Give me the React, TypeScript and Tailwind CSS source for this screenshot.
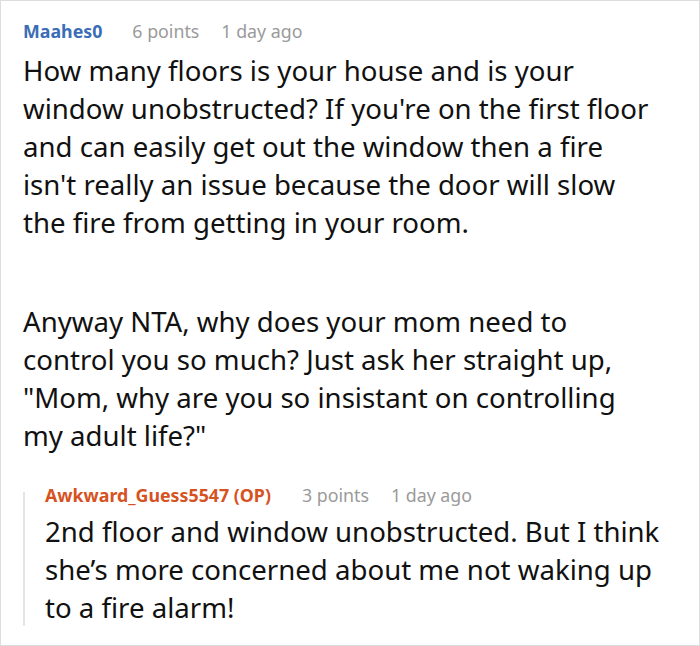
const firstParagraph = [
  "How many floors is your house and is your",
  "window unobstructed? If you're on the first floor",
  "and can easily get out the window then a fire",
  "isn't really an issue because the door will slow",
  "the fire from getting in your room.",
];

const secondParagraph = [
  "Anyway NTA, why does your mom need to",
  "control you so much? Just ask her straight up,",
  "\"Mom, why are you so insistant on controlling",
  "my adult life?\"",
];

const replyLines = [
  "2nd floor and window unobstructed. But I think",
  "she’s more concerned about me not waking up",
  "to a fire alarm!",
];

function Lines({ lines }: { lines: string[] }) {
  return (
    <>
      {lines.map((line, i) => (
        <span key={i} className="block whitespace-nowrap">
          {line}
        </span>
      ))}
    </>
  );
}

export default function App() {
  return (
    <div
      className="w-[700px] h-[646px] border border-[#dddddd] bg-white text-[#111111] overflow-hidden"
      style={{ fontFamily: '"Noto Sans", "Open Sans", sans-serif' }}
    >
      <div className="pl-[22px] pr-[24px] pt-[17px]">
        <div className="flex items-baseline text-[17.8px] leading-[26px]">
          <span className="font-bold text-[#3a6db6]">Maahes0</span>
          <span className="ml-[30px] text-[#9a9a9a]">6 points</span>
          <span className="ml-[22px] text-[#9a9a9a]">1 day ago</span>
        </div>
        <div className="mt-[7px] text-[27.6px] leading-[38px]">
          <p>
            <Lines lines={firstParagraph} />
          </p>
          <p className="mt-[61px]">
            <Lines lines={secondParagraph} />
          </p>
        </div>
        {/* reply thread: the left rule starts just under the header's cap line */}
        <div className="mt-[38px] flex flex-col border-l-2 border-[#e4e4e4] pl-[20px]">
          <div className="-mt-[10px] flex items-baseline text-[17.8px] leading-[26px]">
            <span className="font-bold text-[#d6521f]">Awkward_Guess5547 (OP)</span>
            <span className="ml-[31px] text-[#9a9a9a]">3 points</span>
            <span className="ml-[22px] text-[#9a9a9a]">1 day ago</span>
          </div>
          <p className="mt-[4px] text-[27.6px] leading-[38px]">
            <Lines lines={replyLines} />
          </p>
        </div>
      </div>
    </div>
  );
}
